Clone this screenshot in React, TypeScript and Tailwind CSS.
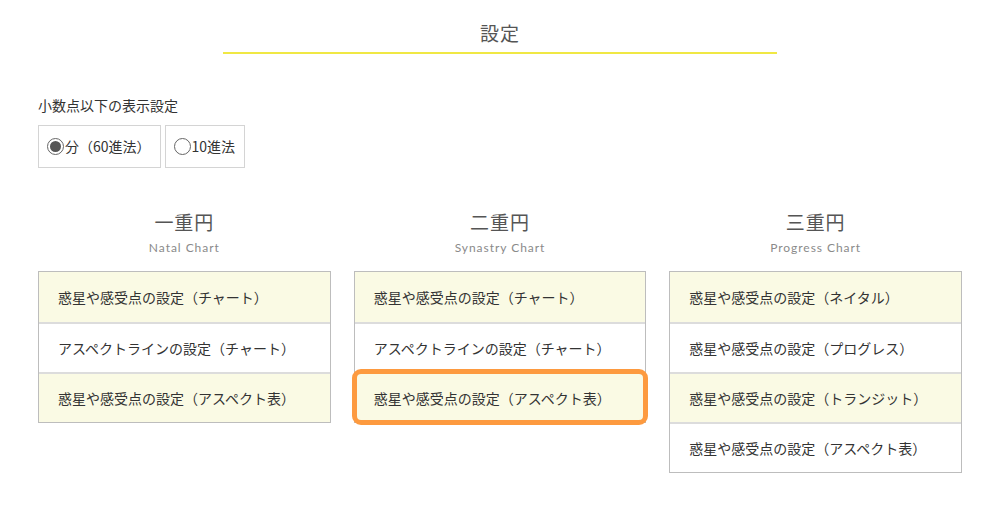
import { useState } from "react";

// 設定ページ — チャート別の設定メニュー

type Column = {
  title: string;
  sub: string;
  items: string[];
};

const columns: Column[] = [
  {
    title: "一重円",
    sub: "Natal Chart",
    items: [
      "惑星や感受点の設定（チャート）",
      "アスペクトラインの設定（チャート）",
      "惑星や感受点の設定（アスペクト表）",
    ],
  },
  {
    title: "二重円",
    sub: "Synastry Chart",
    items: [
      "惑星や感受点の設定（チャート）",
      "アスペクトラインの設定（チャート）",
      "惑星や感受点の設定（アスペクト表）",
    ],
  },
  {
    title: "三重円",
    sub: "Progress Chart",
    items: [
      "惑星や感受点の設定（ネイタル）",
      "惑星や感受点の設定（プログレス）",
      "惑星や感受点の設定（トランジット）",
      "惑星や感受点の設定（アスペクト表）",
    ],
  },
];

function Radio({ checked, label, onClick }: { checked: boolean; label: string; onClick: () => void }) {
  return (
    <button
      type="button"
      onClick={onClick}
      className="flex h-[43px] items-center border border-[#d4d4d4] bg-white pl-[8px] pr-[9px] text-[14px] text-[#333]"
    >
      <span className="mr-[1px] flex h-[17px] w-[17px] items-center justify-center rounded-full border border-[#666]">
        {checked && <span className="h-[11px] w-[11px] rounded-full bg-[#555]" />}
      </span>
      {label}
    </button>
  );
}

export default function App() {
  const [mode, setMode] = useState<"60" | "10">("60");

  return (
    <div
      className="min-h-[512px] bg-white text-[#333]"
      style={{ fontFamily: '"Noto Sans CJK JP", "Noto Sans", sans-serif' }}
    >
      {/* Title */}
      <div className="flex flex-col items-center pt-[19px]">
        <h1 className="text-[19px] leading-[28px] tracking-[0.05em] text-[#555]">設定</h1>
        <div className="mt-[5px] h-[2px] w-[554px] bg-[#f0e844]" />
      </div>

      {/* Decimal display */}
      <div className="px-[38px] pt-[40px]">
        <p className="text-[14px] leading-[22px] text-[#333]">小数点以下の表示設定</p>
        <div className="mt-[9px] flex gap-[4px]">
          <Radio checked={mode === "60"} label="分（60進法）" onClick={() => setMode("60")} />
          <Radio checked={mode === "10"} label="10進法" onClick={() => setMode("10")} />
        </div>
      </div>

      {/* Chart columns */}
      <div className="grid grid-cols-3 gap-[23px] px-[38px] pt-[41px]">
        {columns.map((col, ci) => (
          <section key={col.title}>
            <div className="text-center">
              <h2 className="text-[19px] leading-[26px] tracking-[0.05em] text-[#555]">{col.title}</h2>
              <p
                className="mt-[4px] text-[12px] leading-[18px] tracking-[0.08em] text-[#8a8a8a]"
                style={{ fontFamily: "Lato, sans-serif" }}
              >
                {col.sub}
              </p>
            </div>
            <ul className="mt-[14px] border border-[#bdbdbd]">
              {col.items.map((item, i) => {
                const active = ci === 1 && i === 2;
                return (
                  <li
                    key={item}
                    className={`flex h-[50px] items-center px-[19px] text-[14px] text-[#333] ${
                      i > 0 ? "border-t-2 border-[#dcdcdc]" : ""
                    } ${i % 2 === 0 ? "bg-[#fafae4]" : "bg-white"} ${
                      active ? "rounded-[6px] outline-[5px] outline-offset-[-2px] outline-[#fd9a3f] outline-solid" : ""
                    }`}
                  >
                    {item}
                  </li>
                );
              })}
            </ul>
          </section>
        ))}
      </div>
    </div>
  );
}
